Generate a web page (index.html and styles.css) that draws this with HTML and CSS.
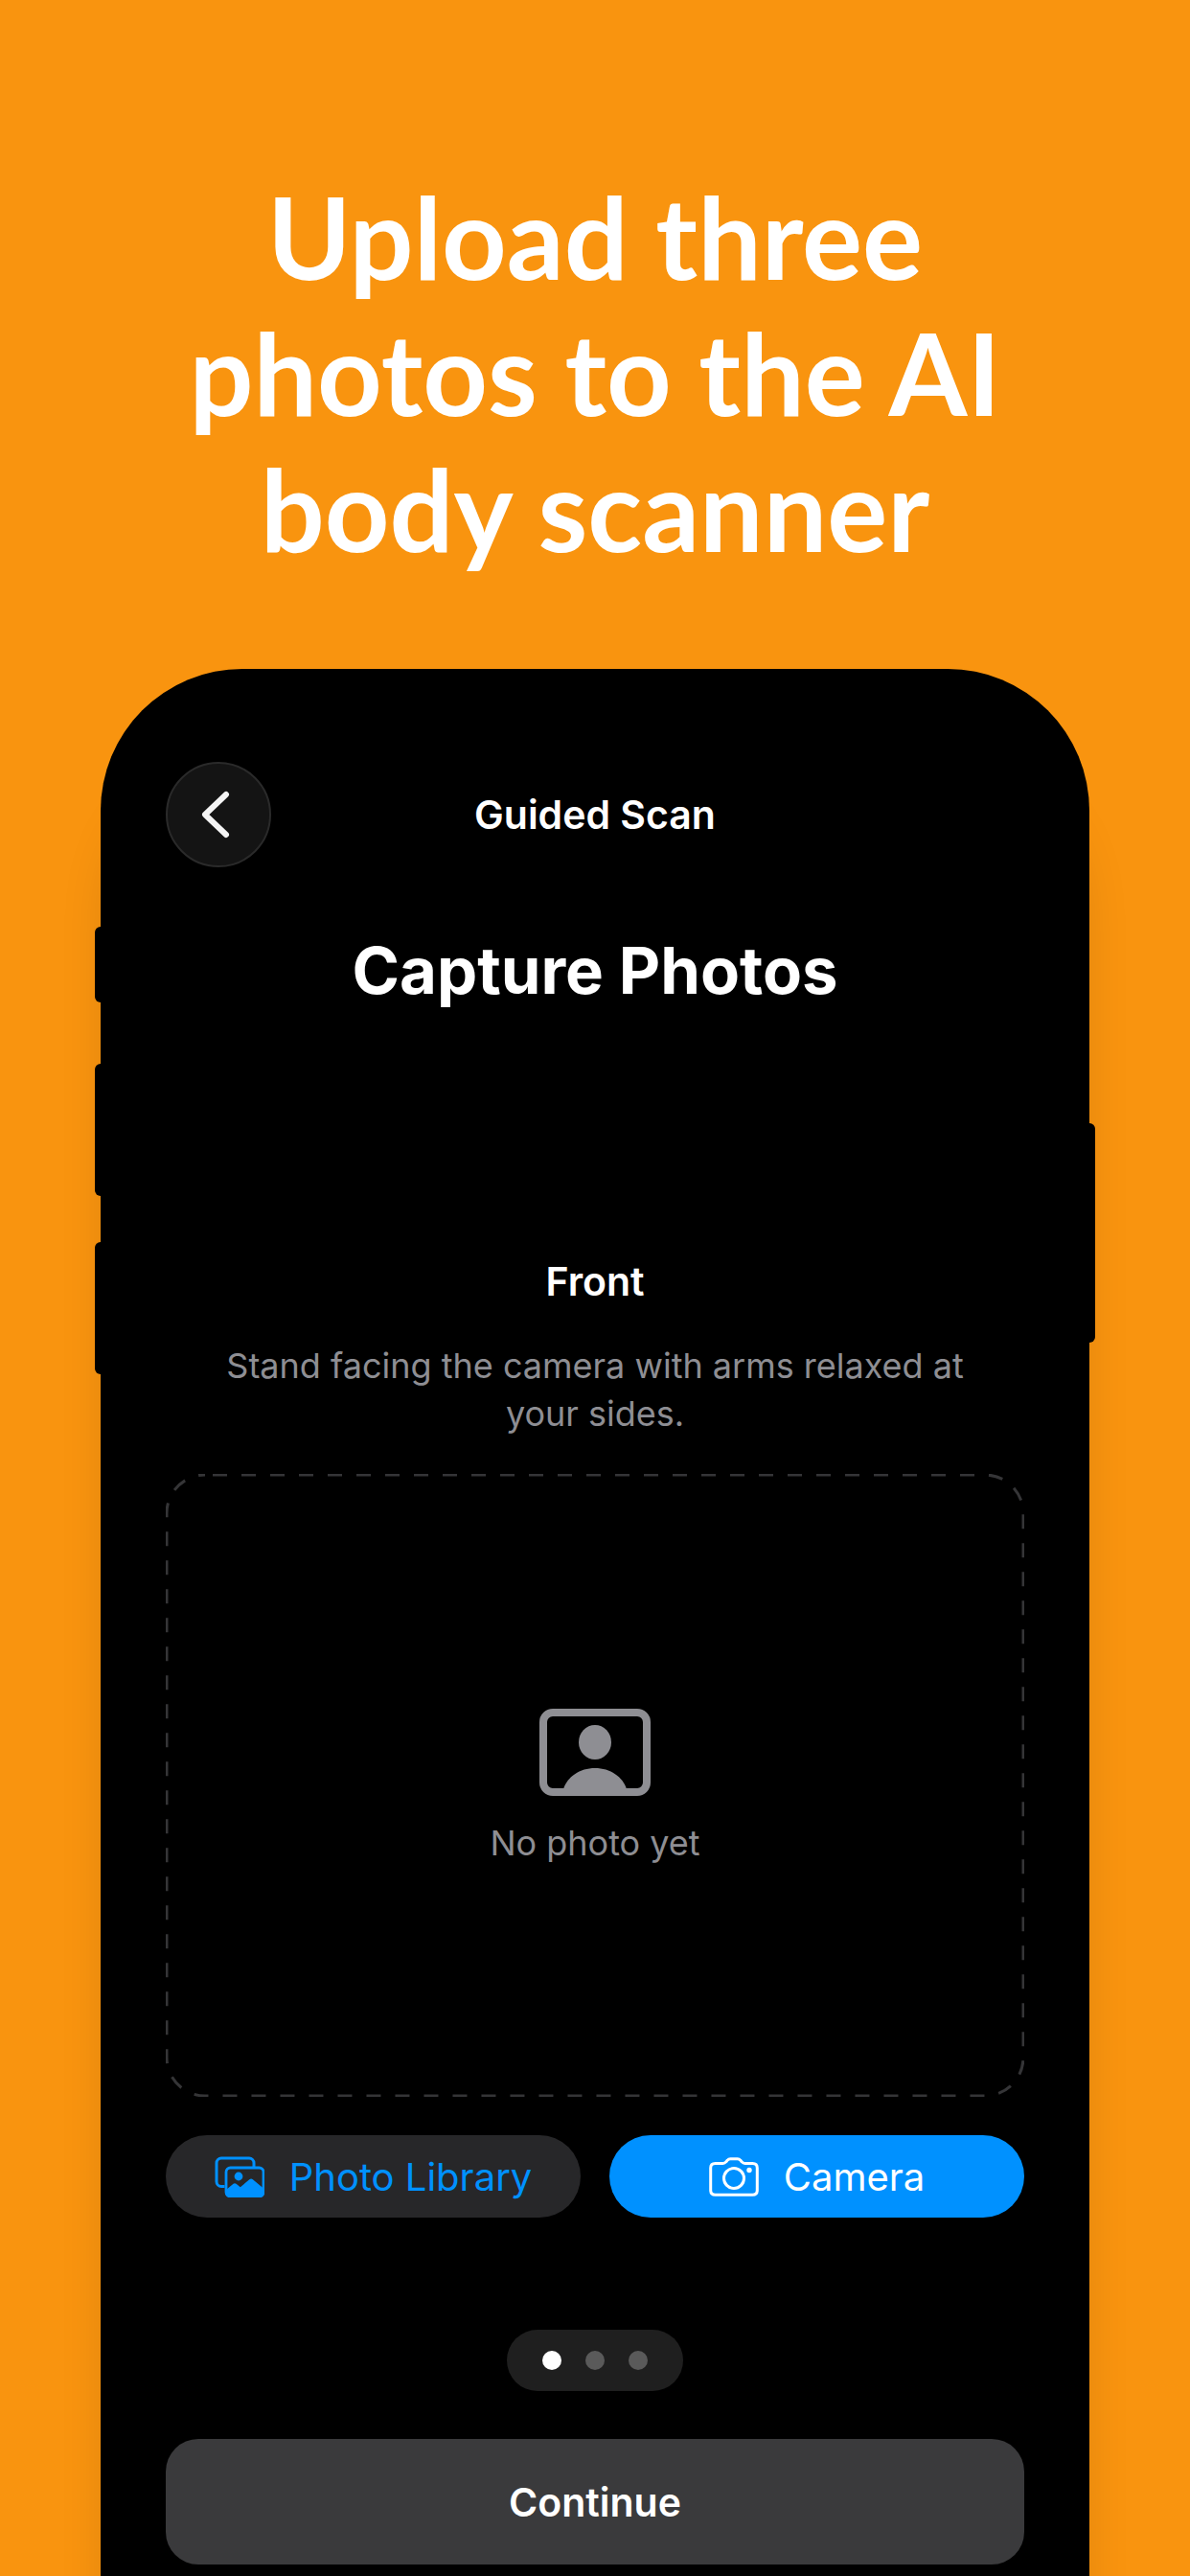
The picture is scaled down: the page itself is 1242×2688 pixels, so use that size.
FILE: index.html
```
<!DOCTYPE html>
<html lang="en">
<head>
    <meta charset="UTF-8">
    <meta name="viewport" content="width=device-width, initial-scale=1.0">
    <title>Guided Scan</title>
    <link rel="stylesheet" href="styles.css">
</head>
<body>
    <h1 class="headline">Upload three photos to the AI body scanner</h1>

    <div class="phone">
        <span class="side-button action"></span>
        <span class="side-button volume-up"></span>
        <span class="side-button volume-down"></span>
        <span class="side-button power"></span>

        <header class="nav-bar">
            <button class="back-button" aria-label="Back">
                <svg width="30" height="50" viewBox="0 0 30 50" fill="none" stroke="#f4f4f4" stroke-width="6" stroke-linecap="round" stroke-linejoin="round">
                    <path d="M26 4L4 25l22 21"/>
                </svg>
            </button>
            <span class="nav-title">Guided Scan</span>
        </header>

        <main class="screen">
            <h2 class="title">Capture Photos</h2>

            <section class="step">
                <h3 class="step-name">Front</h3>
                <p class="step-hint">Stand facing the camera with arms relaxed at your sides.</p>

                <div class="photo-box">
                    <svg class="photo-outline" aria-hidden="true">
                        <rect class="dashes" x="1" y="1" rx="40" ry="40"/>
                    </svg>
                    <svg width="116" height="91" viewBox="0 0 116 91" fill="#8e8e93">
                        <rect x="4" y="4" width="108" height="83" rx="10" fill="none" stroke="#8e8e93" stroke-width="8"/>
                        <ellipse cx="58" cy="35" rx="17" ry="18"/>
                        <path d="M25 84C29 71 42 62 58 62s29 9 33 22z"/>
                    </svg>
                    <p class="photo-empty">No photo yet</p>
                </div>

                <div class="actions">
                    <button class="action-button library">
                        <svg width="52" height="43" viewBox="0 0 52 43" fill="none" stroke="#0091ff" stroke-width="3">
                            <path d="M10.500 31.500H7a5 5 0 0 1-5-5V7a5 5 0 0 1 5-5h29a5 5 0 0 1 5 5v4"/>
                            <rect x="12" y="12" width="39" height="30" rx="4.500" stroke-width="2.800"/>
                            <circle cx="25" cy="21" r="4.400" fill="#0091ff" stroke="none"/>
                            <path d="M12 35l7.500-6.200q1.500-1.200 3 0l4.300 3.500 9.500-8q1.800-1.400 3.600 0L51 33.500V38a4 4 0 0 1-4 4H16a4 4 0 0 1-4-4z" fill="#0091ff" stroke="none"/>
                        </svg>
                        Photo Library
                    </button>
                    <button class="action-button camera">
                        <svg width="52" height="41" viewBox="0 0 52 41" fill="none" stroke="#fff" stroke-width="3">
                            <path d="M6.500 6.500h8c1.500 0 2.300-.5 3.200-1.600l1.600-1.800c.8-1 1.600-1.400 3-1.400h7.400c1.400 0 2.200.4 3 1.400l1.600 1.800c.9 1.100 1.700 1.600 3.200 1.600h8c3 0 4.800 1.700 4.800 4.700v23.300c0 3-1.800 4.800-4.800 4.800h-39c-3 0-4.800-1.800-4.800-4.800V11.200c0-3 1.800-4.700 4.800-4.700z"/>
                            <circle cx="26" cy="22" r="10.500"/>
                            <circle cx="42" cy="13.500" r="2.700" fill="#fff" stroke="none"/>
                        </svg>
                        Camera
                    </button>
                </div>
            </section>

            <div class="page-dots">
                <span class="dot active"></span>
                <span class="dot"></span>
                <span class="dot"></span>
            </div>

            <button class="continue-button">Continue</button>
        </main>
    </div>
</body>
</html>
```

FILE: styles.css
```
* {
    box-sizing: border-box;
}
body {
    margin: 0;
    min-height: 100vh;
    display: flex;
    flex-direction: column;
    background-color: #f9940f;
    color: #ffffff;
    font-family: Inter, sans-serif;
    overflow-x: hidden;
}
h1, h2, h3, p {
    margin: 0;
}
button {
    border: none;
    padding: 0;
    color: #ffffff;
    font-family: inherit;
    font-size: 40px;
    cursor: pointer;
}
.headline {
    padding: 176px 150px 96px;
    font-family: Lato, sans-serif;
    font-size: 118px;
    font-weight: 700;
    line-height: 142px;
    text-align: center;
}

/* Phone frame */
.phone {
    position: relative;
    flex: 1;
    margin: 0 105px;
    padding: 97px 68px 12px;
    background-color: #000000;
    border-radius: 148px 148px 0 0;
    box-shadow: 0 100px 60px -20px rgba(0, 0, 0, 0.2);
}
.side-button {
    position: absolute;
    left: -6px;
    width: 12px;
    height: 138px;
    background-color: #000000;
    border-radius: 6px;
}
.action {
    top: 269px;
    height: 79px;
}
.volume-up {
    top: 412px;
}
.volume-down {
    top: 598px;
}
.power {
    left: auto;
    right: -6px;
    top: 474px;
    height: 229px;
}

/* Navigation bar */
.nav-bar {
    display: grid;
    grid-template-columns: 110px 1fr 110px;
    align-items: center;
}
.back-button {
    display: flex;
    align-items: center;
    justify-content: center;
    height: 110px;
    padding-right: 6px;
    background-color: #141414;
    border: 2px solid #2a2a2a;
    border-radius: 50%;
}
.nav-title {
    font-size: 41px;
    font-weight: 600;
    text-align: center;
}

/* Screen content */
.screen {
    display: flex;
    flex-direction: column;
    text-align: center;
}
.title {
    padding-top: 67px;
    font-size: 67px;
    font-weight: 700;
    line-height: 82px;
}
.step {
    padding-top: 258px;
}
.step-name {
    font-size: 41px;
    font-weight: 600;
    line-height: 50px;
}
.step-hint {
    padding: 38px 50px;
    color: #8e8e93;
    font-size: 36px;
    line-height: 50px;
}
.photo-box {
    position: relative;
    display: flex;
    flex-direction: column;
    align-items: center;
    justify-content: center;
    gap: 24px;
    height: 650px;
    padding-top: 4px;
}
.photo-outline {
    position: absolute;
    inset: 0;
    width: 100%;
    height: 100%;
}
.dashes {
    width: calc(100% - 2px);
    height: calc(100% - 2px);
    fill: none;
    stroke: #353537;
    stroke-width: 3px;
    stroke-dasharray: 15 15;
    stroke-dashoffset: -8;
}
.photo-empty {
    color: #8e8e93;
    font-size: 36px;
    line-height: 50px;
}
.actions {
    display: grid;
    grid-template-columns: 1fr 1fr;
    gap: 30px;
    padding-top: 40px;
}
.action-button {
    display: flex;
    align-items: center;
    justify-content: center;
    gap: 26px;
    height: 86px;
    border-radius: 43px;
}
.library {
    background-color: #272729;
    color: #0091ff;
}
.camera {
    background-color: #0091ff;
}
.page-dots {
    display: flex;
    align-self: center;
    gap: 25px;
    margin: 117px 0 50px;
    padding: 22px 37px;
    background-color: #1f1f1f;
    border-radius: 32px;
}
.dot {
    width: 20px;
    height: 20px;
    background-color: #5a5a5a;
    border-radius: 50%;
}
.dot.active {
    background-color: #ffffff;
}
.continue-button {
    height: 131px;
    background-color: #3a3a3c;
    border-radius: 34px;
    font-size: 41px;
    font-weight: 600;
}
```
